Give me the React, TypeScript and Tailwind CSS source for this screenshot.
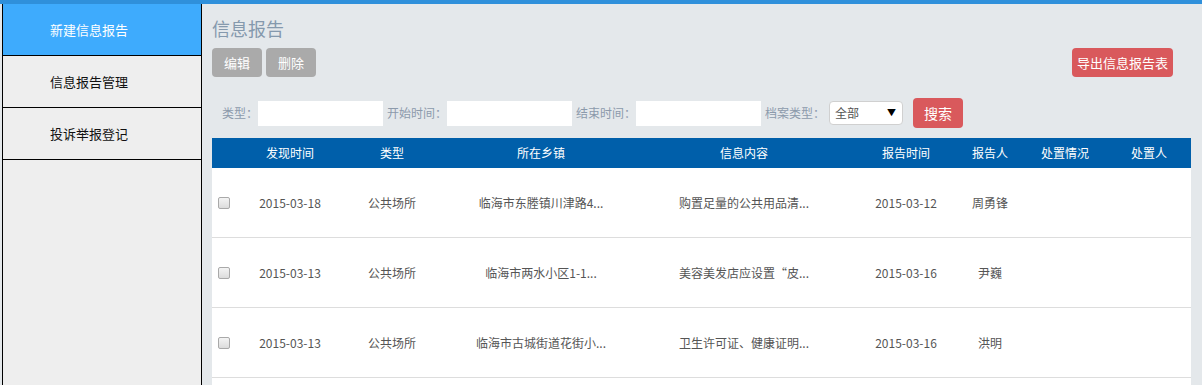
const menu = ['新建信息报告', '信息报告管理', '投诉举报登记'];

const columns = [
  { label: '', w: 'w-[33px]' },
  { label: '发现时间', w: 'w-[90px]' },
  { label: '类型', w: 'w-[114px]' },
  { label: '所在乡镇', w: 'w-[184px]' },
  { label: '信息内容', w: 'w-[222px]' },
  { label: '报告时间', w: 'w-[102px]' },
  { label: '报告人', w: 'w-[66px]' },
  { label: '处置情况', w: 'w-[84px]' },
  { label: '处置人', w: 'w-[84px]' },
];

const rows = [
  ['2015-03-18', '公共场所', '临海市东塍镇川津路4...', '购置足量的公共用品清...', '2015-03-12', '周勇锋', '', ''],
  ['2015-03-13', '公共场所', '临海市两水小区1-1...', '美容美发店应设置“皮...', '2015-03-16', '尹巍', '', ''],
  ['2015-03-13', '公共场所', '临海市古城街道花街小...', '卫生许可证、健康证明...', '2015-03-16', '洪明', '', ''],
  ['', '', '', '', '', '', '', ''],
];

const Field = ({ label, width = 'w-[125px]' }: { label: string; width?: string }) => (
  <div className="flex items-center">
    <span className="text-[12px] text-[#8c9aab] whitespace-nowrap">{label}</span>
    <div className={`${width} h-[25px] bg-white`} />
  </div>
);

const Checkbox = () => (
  <span className="block w-[12px] h-[12px] rounded-[2px] border border-[#a9a9a9] bg-gradient-to-b from-[#f4f4f4] to-[#dcdcdc]" />
);

export default function App() {
  return (
    <div
      className="w-[1202px] h-[385px] overflow-hidden bg-[#e4e8eb] flex flex-col"
      style={{ fontFamily: '"Noto Sans CJK SC", "Microsoft YaHei", sans-serif' }}
    >
      <div className="h-[4px] bg-[#2f90db] shrink-0" />
      <div className="flex flex-1 min-h-0">
        {/* sidebar */}
        <div className="ml-[2px] w-[200px] bg-[#eeeeee] border-l border-r border-black shrink-0 flex flex-col">
          {menu.map((m, i) => (
            <div
              key={m}
              className={`h-[52px] border-b border-black flex items-center pl-[47px] text-[13px] ${
                i === 0 ? 'bg-[#3eabfd] text-white' : 'text-[#111]'
              }`}
            >
              {m}
            </div>
          ))}
        </div>

        {/* main */}
        <div className="flex-1 pl-[10px] pr-[11px] flex flex-col">
          <div className="pt-[11px] text-[18px] leading-[26px] text-[#8599ad]">信息报告</div>

          <div className="mt-[7px] flex items-center justify-between">
            <div className="flex gap-[4px]">
              <button className="h-[29px] px-[12px] rounded-[4px] bg-[#aaaaaa] text-white text-[13px]">编辑</button>
              <button className="h-[29px] px-[12px] rounded-[4px] bg-[#aaaaaa] text-white text-[13px]">删除</button>
            </div>
            <button className="mr-[18px] h-[29px] px-[5px] rounded-[4px] bg-[#d9595c] text-white text-[13px]">
              导出信息报告表
            </button>
          </div>

          <div className="mt-[21px] pl-[10px] flex items-center gap-[4px]">
            <Field label="类型：" />
            <Field label="开始时间：" />
            <Field label="结束时间：" />
            <div className="flex items-center">
              <span className="text-[12px] text-[#8c9aab] whitespace-nowrap">档案类型：</span>
              <div className="ml-[4px] w-[74px] h-[24px] bg-white rounded-[4px] border border-[#d0d0d0] flex items-center justify-between pl-[5px] pr-[6px]">
                <span className="text-[12px] text-[#555]">全部</span>
                <span className="text-[9px] text-black">▼</span>
              </div>
            </div>
            <button className="ml-[6px] h-[30px] w-[50px] rounded-[4px] bg-[#d9595c] text-white text-[14px]">搜索</button>
          </div>

          <div className="mt-[10px] w-[979px]">
            <div className="flex h-[30px] bg-[#005faa] text-white text-[12px]">
              {columns.map((c, i) => (
                <div key={i} className={`${c.w} flex items-center justify-center`}>
                  {c.label}
                </div>
              ))}
            </div>
            {rows.map((r, ri) => (
              <div key={ri} className="flex h-[70px] bg-white border-b border-[#dddddd] text-[12px] text-[#555]">
                <div className="w-[33px] flex items-center pl-[6px]">{r[0] && <Checkbox />}</div>
                {r.map((cell, ci) => (
                  <div key={ci} className={`${columns[ci + 1].w} flex items-center justify-center whitespace-nowrap`}>
                    {cell}
                  </div>
                ))}
              </div>
            ))}
          </div>
        </div>
      </div>
    </div>
  );
}
